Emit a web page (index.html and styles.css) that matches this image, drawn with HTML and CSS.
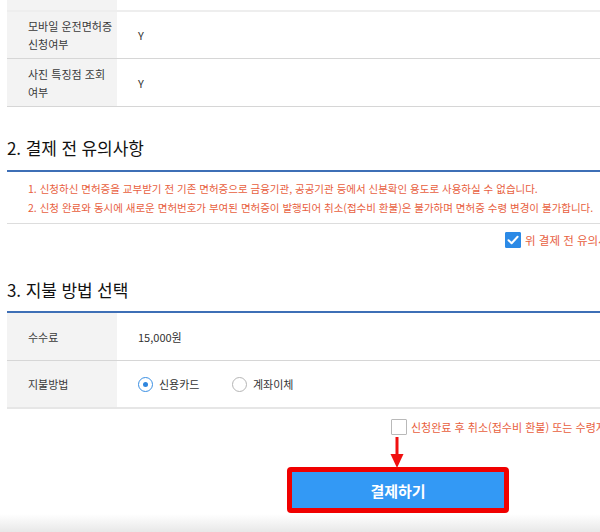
FILE: index.html
```html
<!DOCTYPE html>
<html lang="ko">
<head>
<meta charset="utf-8">
<link rel="stylesheet" href="styles.css">
</head>
<body>
<div class="page">
  <div class="table">
    <div class="row row-top"><div class="th"></div><div class="td"></div></div>
    <div class="row"><div class="th">모바일 운전면허증<br>신청여부</div><div class="td">Y</div></div>
    <div class="row"><div class="th">사진 특징점 조회<br>여부</div><div class="td">Y</div></div>
  </div>

  <h2 class="heading h2a">2. 결제 전 유의사항</h2>
  <div class="notice">
    <p>1. 신청하신 면허증을 교부받기 전 기존 면허증으로 금융기관, 공공기관 등에서 신분확인 용도로 사용하실 수 없습니다.</p>
    <p>2. 신청 완료와 동시에 새로운 면허번호가 부여된 면허증이 발행되어 취소(접수비 환불)은 불가하며 면허증 수령 변경이 불가합니다.</p>
  </div>
  <div class="agree agree1">
    <span class="cbox checked"><svg viewBox="0 0 16 16" width="16" height="16"><path d="M3.5 8.2 L6.6 11.2 L12.6 4.8" fill="none" stroke="#fff" stroke-width="2" stroke-linecap="round" stroke-linejoin="round"/></svg></span>
    <span class="agree-text">위 결제 전 유의사항을 모두 확인하였습니다.</span>
  </div>

  <h2 class="heading h2b">3. 지불 방법 선택</h2>
  <div class="table table2">
    <div class="row"><div class="th">수수료</div><div class="td">15,000원</div></div>
    <div class="row row-last"><div class="th">지불방법</div>
      <div class="td radios">
        <label class="radio"><span class="rdot on"></span>신용카드</label>
        <label class="radio"><span class="rdot"></span>계좌이체</label>
      </div>
    </div>
  </div>
  <div class="agree agree2">
    <span class="cbox"></span>
    <span class="agree-text">신청완료 후 취소(접수비 환불) 또는 수령지 변경이 불가함을 확인하였습니다.</span>
  </div>
  <div class="submit-area">
    <svg class="arrow" viewBox="0 0 14 32" width="14" height="32"><path d="M7 0 V19" stroke="#f01010" stroke-width="3"/><path d="M0.5 17 L13.5 17 L7 31 Z" fill="#f01010"/></svg>
    <div class="btn-wrap"><button class="btn">결제하기</button></div>
  </div>
</div>
<div class="fade"></div>
</body>
</html>
```
FILE: styles.css
```css
html, body {
  margin: 0;
  padding: 0;
  background: #fff;
  overflow: hidden;
  width: 600px;
  height: 532px;
}
body {
  font-family: "Noto Sans CJK KR", "Noto Sans", sans-serif;
  color: #333;
  position: relative;
}
.page {
  margin-left: 7px;
  width: 785px;
}
.table .row {
  display: grid;
  grid-template-columns: 110px 1fr;
  border-bottom: 1px solid #d6d6d6;
  height: 47px;
}
.table .row-top {
  height: 10px;
  border-bottom: 2px solid #eeeeee;
}
.table .row:nth-child(2) { height: 46px; }
.th {
  background: #f3f3f3;
  font-size: 11px;
  line-height: 18px;
  padding-left: 21px;
  display: flex;
  align-items: center;
  color: #3a3a3a;
}
.td {
  font-size: 11px;
  padding-left: 21px;
  display: flex;
  align-items: center;
  color: #333;
}
.heading {
  margin: 0;
  font-size: 17px;
  font-weight: 400;
  line-height: 24px;
  color: #111;
  border-bottom: 2px solid #3e6fb6;
  letter-spacing: -0.1px;
}
.h2a { margin-top: 29px; padding-bottom: 10px; }
.h2b { margin-top: 30px; padding-bottom: 9px; }
.notice {
  padding: 7px 0 6px 21px;
  border-bottom: 1px solid #dddddd;
}
.notice p {
  margin: 0;
  font-size: 10.5px;
  line-height: 19px;
  color: #e8603e;
  white-space: nowrap;
}
.agree {
  display: flex;
  align-items: center;
  gap: 4px;
  height: 16px;
  white-space: nowrap;
}
.agree1 { margin-top: 8px; padding-left: 498px; }
.agree2 { margin-top: 10px; padding-left: 384px; }
.agree-text {
  font-size: 11px;
  color: #e8603e;
}
.agree1 .agree-text { font-size: 11.5px; }
.cbox {
  width: 16px;
  height: 16px;
  box-sizing: border-box;
  border: 1px solid #b9b9b9;
  border-radius: 1px;
  background: #fff;
  flex: none;
  display: block;
}
.cbox.checked {
  background: #2c8ae6;
  border-color: #2c8ae6;
}
.cbox svg { display: block; margin: -1px; }
.table2 .row { height: 47px; }
.table2 .row-last {
  height: 46px;
  border-bottom: 2px solid #e6e6e6;
}
.radios { gap: 0; }
.radio {
  display: flex;
  align-items: center;
  gap: 6px;
  font-size: 11px;
  width: 94px;
}
.rdot {
  width: 15px;
  height: 15px;
  box-sizing: border-box;
  border-radius: 50%;
  border: 1px solid #b5b5b5;
  position: relative;
  flex: none;
}
.rdot.on { border: 1.5px solid #3a8fe3; }
.rdot.on::after {
  content: "";
  position: absolute;
  left: 50%;
  top: 50%;
  width: 5px;
  height: 5px;
  margin: -2.5px 0 0 -2.5px;
  border-radius: 50%;
  background: #2f86de;
}
.submit-area {
  position: relative;
  padding-top: 32px;
}
.arrow {
  position: absolute;
  left: 383px;
  top: 2px;
}
.btn-wrap {
  display: flex;
  justify-content: center;
}
.btn {
  width: 222px;
  height: 46px;
  box-sizing: border-box;
  border: 5px solid #f00000;
  border-radius: 4px;
  background: #3399f5;
  color: #fff;
  font-family: "Noto Sans CJK KR", "Noto Sans", sans-serif;
  font-size: 15px;
  font-weight: 700;
  padding: 0;
  margin-left: -3px;
}
.fade {
  position: absolute;
  left: 0;
  bottom: 0;
  width: 600px;
  height: 18px;
  background: linear-gradient(to bottom, rgba(236,236,236,0), #e8e8e8);
}
```
